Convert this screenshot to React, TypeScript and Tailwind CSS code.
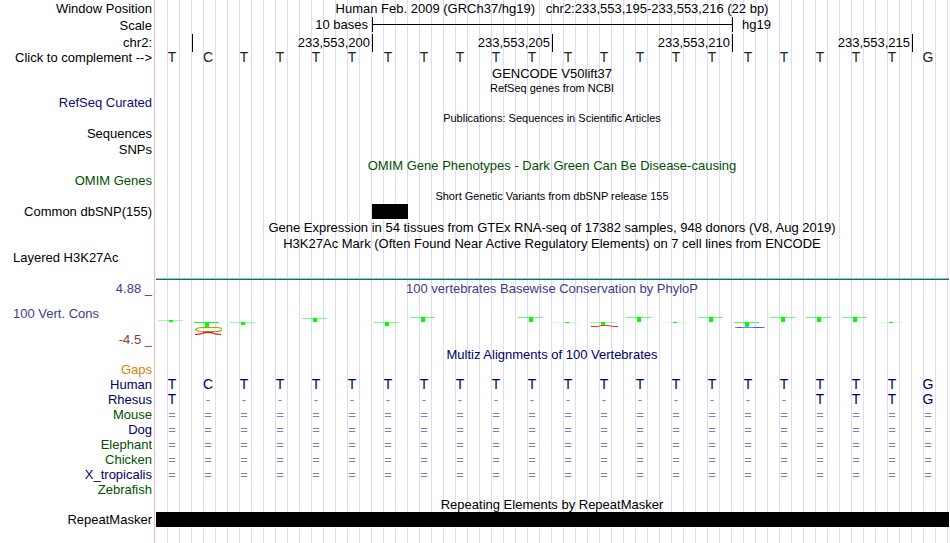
import type { ReactNode } from "react";
import { clsx } from "clsx";

const SEQUENCE = "TCTTTTTTTTTTTTTTTTTTTG";
const GAPPED = "T-----------------TTTG";
const UNALIGNED = "======================";

const BLACK = "text-black";
const NAVY = "text-[#000064]";
const GREEN = "text-[#005000]";

const SPECIES = [
  { name: "Human", color: NAVY, bases: SEQUENCE },
  { name: "Rhesus", color: NAVY, bases: GAPPED },
  { name: "Mouse", color: GREEN, bases: UNALIGNED },
  { name: "Dog", color: NAVY, bases: UNALIGNED },
  { name: "Elephant", color: GREEN, bases: UNALIGNED },
  { name: "Chicken", color: GREEN, bases: UNALIGNED },
  { name: "X_tropicalis", color: NAVY, bases: UNALIGNED },
  { name: "Zebrafish", color: GREEN, bases: "" },
];

// one entry per base that has a score: top of the T, height of its stem, strength of its bar
const SCORES = [
  { base: 0, top: 23, height: 2, opacity: 0.4 },
  { base: 1, top: 25, height: 5, opacity: 0.9 },
  { base: 2, top: 25, height: 3, opacity: 0.4 },
  { base: 4, top: 21, height: 4, opacity: 0.5 },
  { base: 6, top: 25, height: 4, opacity: 0.5 },
  { base: 7, top: 20, height: 5, opacity: 0.6 },
  { base: 10, top: 20, height: 5, opacity: 0.6 },
  { base: 11, top: 25, height: 1, opacity: 0.15 },
  { base: 12, top: 25, height: 3, opacity: 0.4 },
  { base: 13, top: 20, height: 5, opacity: 0.6 },
  { base: 14, top: 25, height: 1, opacity: 0.15 },
  { base: 15, top: 20, height: 5, opacity: 0.6 },
  { base: 16, top: 25, height: 5, opacity: 0.7 },
  { base: 17, top: 20, height: 5, opacity: 0.6 },
  { base: 18, top: 20, height: 5, opacity: 0.6 },
  { base: 19, top: 20, height: 5, opacity: 0.6 },
  { base: 20, top: 25, height: 1, opacity: 0.15 },
];

interface RowProps {
  label?: ReactNode;
  labelClass?: string;
  className?: string;
  children?: ReactNode;
}

function Row({ label, labelClass = BLACK, className = "h-[15px]", children }: RowProps) {
  return (
    <div className={clsx("flex shrink-0", className)}>
      <div
        className={clsx(
          "flex w-[155px] shrink-0 items-center justify-end border-r border-[#ffb4b4] pr-0.5 whitespace-pre",
          labelClass
        )}
      >
        {label}
      </div>
      <div className="min-w-0 grow bg-[linear-gradient(to_right,transparent_calc(100%_-_1px),#dcdcff_0)] bg-[length:calc(100%/66)_100%] bg-origin-content bg-clip-content pr-0.5 pl-px">
        {children}
      </div>
    </div>
  );
}

function Title({ color = BLACK, small, children }: { color?: string; small?: boolean; children: ReactNode }) {
  return (
    <div className={clsx("flex h-full items-center justify-center whitespace-pre", small && "text-[11px]", color)}>
      {children}
    </div>
  );
}

function Bases({ bases, color = "text-[#222222]" }: { bases: string; color?: string }) {
  return (
    <div className="grid h-full grid-cols-22 items-center">
      {bases.split("").map((base, i) => (
        <span
          key={i}
          className={clsx(
            "pr-1 text-center",
            base === "=" || base === "-" ? "text-[#7f7fbf]" : ["text-[14px] leading-[15px]", color]
          )}
        >
          {base}
        </span>
      ))}
    </div>
  );
}

function ScaleBar() {
  return (
    <div className="grid h-[15px] grid-cols-22">
      <span className="col-span-6 pr-1 text-right">10 bases</span>
      <div className="col-span-10 flex items-center border-l border-black">
        <div className="h-px w-full bg-black" />
      </div>
      <span className="col-span-6 border-l border-black pl-[9px]">hg19</span>
    </div>
  );
}

function Ruler() {
  return (
    <div className="grid h-[14px] grid-cols-22 leading-[18px]">
      <span />
      {["233,553,200", "233,553,205", "233,553,210", "233,553,215"].map((position) => (
        <span key={position} className="col-span-5 border-l border-black pr-0.5 text-right">
          {position}
        </span>
      ))}
      <span className="border-l border-black" />
    </div>
  );
}

function ConservationPlot() {
  return (
    <svg viewBox="0 0 792 50" preserveAspectRatio="none" className="block h-[50px] w-full">
      {SCORES.map(({ base, top, height, opacity }) => (
        <g key={base} fill="#00ff00">
          <rect x={base * 36 + 2} y={top} width="25" height="1" opacity={opacity} />
          <rect x={base * 36 + 13} y={top} width="4" height={height} />
        </g>
      ))}
      <path
        d="M66 31.5 Q64 30.5 59 30.5 H47 Q41 30.5 39.5 32.5 Q41 34.5 47 34.5 H59 Q64 34.5 66 33"
        fill="none"
        stroke="#a8a000"
        strokeWidth="1.2"
      />
      <path d="M39 37.5 L45 36.8 Q52 34 59 36.8 L65 37.5" fill="none" stroke="#ff0000" strokeWidth="1.2" />
      <path d="M435 29.5 H441 L446 28.5 H452 L457 29.5 H462" fill="none" stroke="#ff3030" strokeWidth="1" />
      <path d="M579 30.5 H609" fill="none" stroke="#8080ff" strokeWidth="1" />
      <path d="M581 30.5 H586 M597 30.5 H607" fill="none" stroke="#5050ff" strokeWidth="1" />
    </svg>
  );
}

export default function App() {
  return (
    <main className="flex min-h-screen flex-col bg-white font-['Liberation_Sans',Arial,sans-serif] text-[13px] leading-[15px] text-black">
      <Row label="Window Position" className="h-4">
        <Title>{"Human Feb. 2009 (GRCh37/hg19)   chr2:233,553,195-233,553,216 (22 bp)"}</Title>
      </Row>
      <Row label="Scale" className="h-[18px]">
        <div className="pt-px">
          <ScaleBar />
        </div>
      </Row>
      <Row label="chr2:" className="h-4">
        <Ruler />
      </Row>
      <Row label={<button className="whitespace-pre">{"Click to complement -->"}</button>}>
        <Bases bases={SEQUENCE} />
      </Row>

      <Row className="h-4">
        <Title>GENCODE V50lift37</Title>
      </Row>
      <Row className="h-[14px]">
        <Title small>RefSeq genes from NCBI</Title>
      </Row>
      <Row label="RefSeq Curated" labelClass="text-[#0c0c78]" />
      <Row className="h-4">
        <Title small>Publications: Sequences in Scientific Articles</Title>
      </Row>
      <Row label="Sequences" />
      <Row label="SNPs" className="h-[17px]" />
      <Row>
        <Title color={GREEN}>OMIM Gene Phenotypes - Dark Green Can Be Disease-causing</Title>
      </Row>
      <Row label="OMIM Genes" labelClass={GREEN} />
      <Row className="h-4">
        <Title small>Short Genetic Variants from dbSNP release 155</Title>
      </Row>
      <Row label="Common dbSNP(155)">
        <div className="grid h-full grid-cols-22">
          <div className="col-start-7 bg-black" />
        </div>
      </Row>
      <Row className="h-[17px]">
        <Title>Gene Expression in 54 tissues from GTEx RNA-seq of 17382 samples, 948 donors (V8, Aug 2019)</Title>
      </Row>
      <Row className="h-[14px]">
        <Title>H3K27Ac Mark (Often Found Near Active Regulatory Elements) on 7 cell lines from ENCODE</Title>
      </Row>
      <Row label={<span className="grow pl-[13px]">Layered H3K27Ac</span>} />
      <Row>
        <div className="-mr-px flex h-full items-end">
          <div className="h-0.5 w-full border-t border-[#66dcc0] bg-[#2f6060]" />
        </div>
      </Row>

      <Row label="4.88 _" labelClass="text-[#3c3c8c]" className="h-[17px]">
        <Title color="text-[#3c3c8c]">100 vertebrates Basewise Conservation by PhyloP</Title>
      </Row>
      <Row
        className="h-[50px]"
        label={
          <div className="flex h-full grow flex-col justify-between pt-[9px]">
            <span className="pl-[13px] text-[#3c3c8c]">100 Vert. Cons</span>
            <span className="text-right text-[#8c3c3c]">-4.5 _</span>
          </div>
        }
      >
        <ConservationPlot />
      </Row>
      <Row>
        <Title color={NAVY}>Multiz Alignments of 100 Vertebrates</Title>
      </Row>
      <Row label="Gaps" labelClass="text-[#e08000]" />
      {SPECIES.map(({ name, color, bases }) => (
        <Row key={name} label={name} labelClass={color}>
          <Bases bases={bases} color={NAVY} />
        </Row>
      ))}
      <Row>
        <Title>Repeating Elements by RepeatMasker</Title>
      </Row>
      <Row label="RepeatMasker">
        <div className="-mr-px h-full bg-black" />
      </Row>
      <Row className="grow" />
    </main>
  );
}
